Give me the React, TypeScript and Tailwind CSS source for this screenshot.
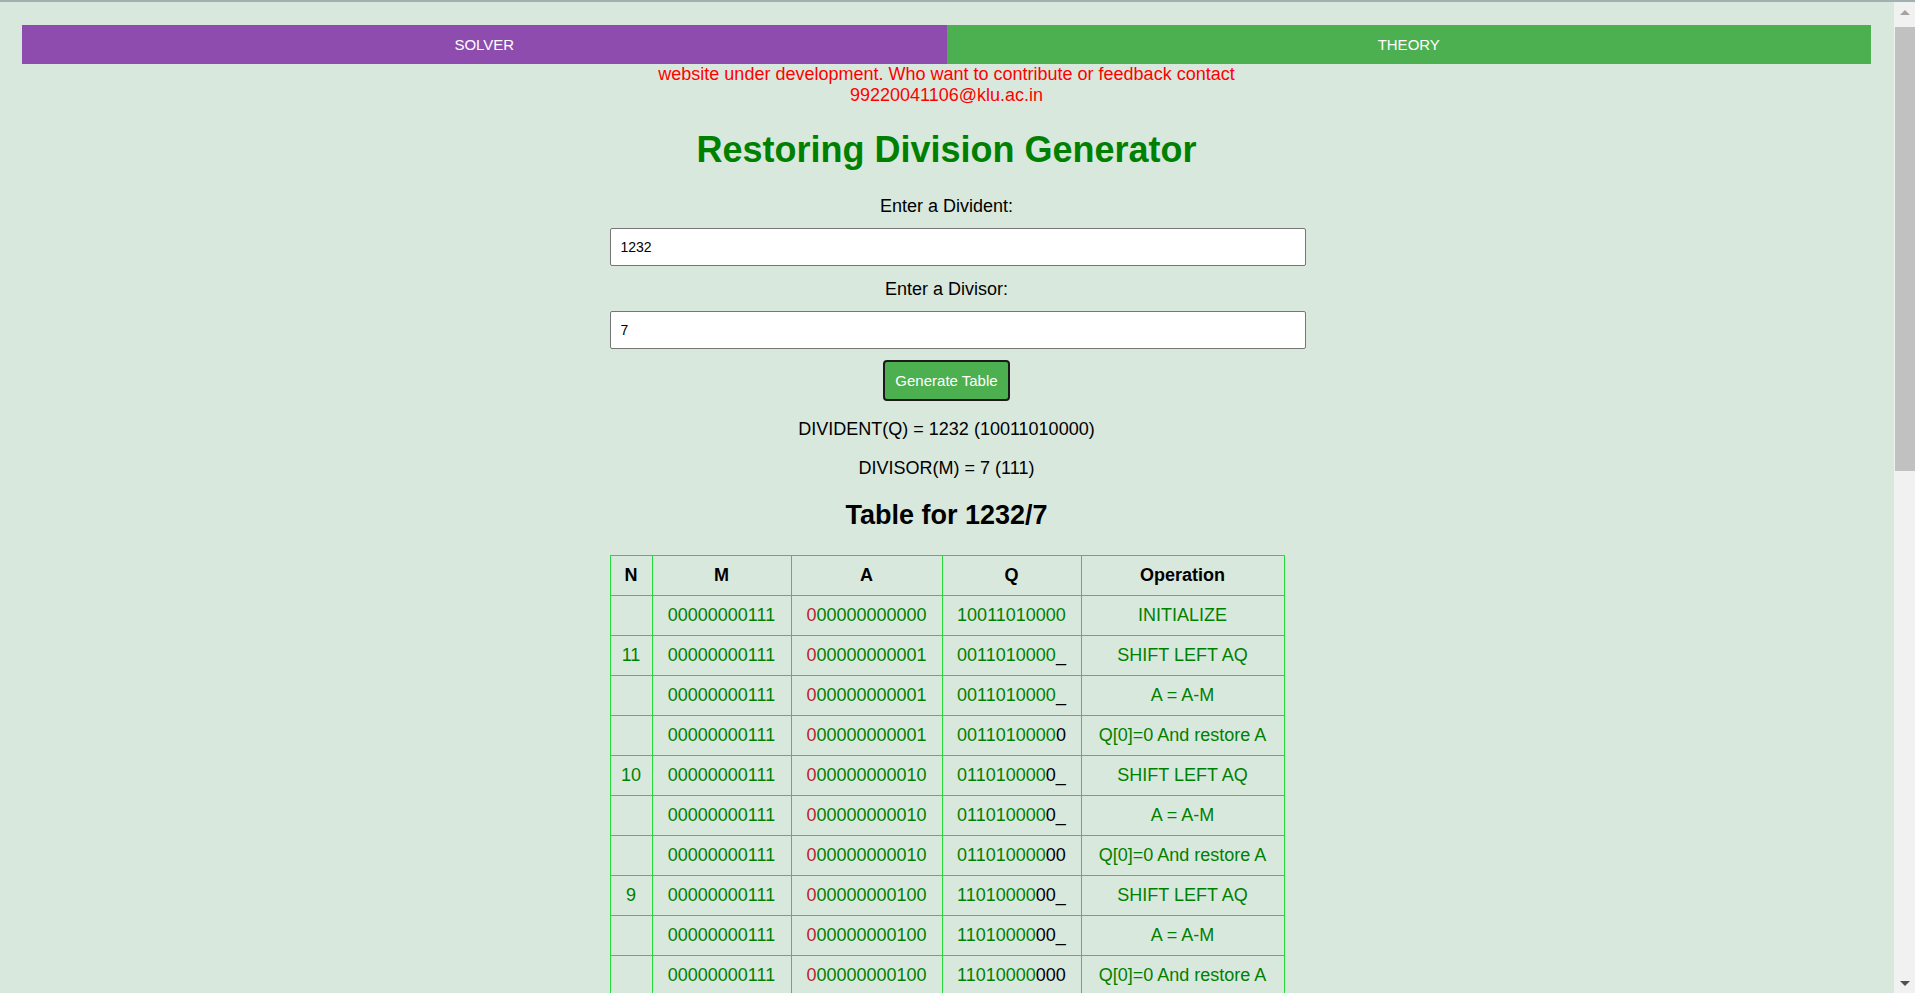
import { useState } from "react";

type Row = {
  n: string;
  m: string;
  a: string;
  qGreen: string;
  qBlack: string;
  op: string;
};

function buildRows(dividend: number, divisor: number): Row[] {
  const orig = dividend.toString(2);
  const n = orig.length;
  const m = divisor.toString(2).padStart(n, "0");
  const fmt = (v: number) => v.toString(2).padStart(n + 1, "0");
  const rows: Row[] = [];
  let a = 0;
  let quot = "";

  rows.push({ n: "", m, a: fmt(a), qGreen: orig, qBlack: "", op: "INITIALIZE" });

  for (let i = 0; i < n; i++) {
    const count = String(n - i);
    a = a * 2 + Number(orig[i]);
    const green = orig.slice(i + 1);
    rows.push({ n: count, m, a: fmt(a), qGreen: green, qBlack: quot + "_", op: "SHIFT LEFT AQ" });

    const diff = a - divisor;
    if (diff < 0) {
      rows.push({ n: "", m, a: fmt(a), qGreen: green, qBlack: quot + "_", op: "A = A-M" });
      quot += "0";
      rows.push({ n: "", m, a: fmt(a), qGreen: green, qBlack: quot, op: "Q[0]=0 And restore A" });
    } else {
      a = diff;
      rows.push({ n: "", m, a: fmt(a), qGreen: green, qBlack: quot + "_", op: "A = A-M" });
      quot += "1";
      rows.push({ n: "", m, a: fmt(a), qGreen: green, qBlack: quot, op: "Q[0]=1" });
    }
  }
  return rows;
}

// the window's scrollbar, as it shows in the screenshot
function ScrollBar() {
  return (
    <div className="fixed right-0 top-[2px] bottom-0 flex w-[21px] flex-col bg-[#f1f1f1]">
      <div className="flex h-[17px] items-center justify-center pt-[4px]">
        <div className="h-0 w-0 border-x-[5px] border-b-[5px] border-x-transparent border-b-[#a3a3a3]" />
      </div>
      <div className="ml-[1px] mt-[8px] h-[444px] bg-[#c1c1c1]" />
      <div className="flex-1" />
      <div className="flex h-[17px] items-center justify-center pb-[2px]">
        <div className="h-0 w-0 border-x-[5px] border-t-[5px] border-x-transparent border-t-[#505050]" />
      </div>
    </div>
  );
}

export default function App() {
  const [dividendText, setDividendText] = useState("1232");
  const [divisorText, setDivisorText] = useState("7");
  const [pair, setPair] = useState<[number, number]>([1232, 7]);
  const [tab, setTab] = useState("solver");

  function handleGenerate() {
    const q = parseInt(dividendText, 10);
    const m = parseInt(divisorText, 10);
    if (!q || !m) {
      alert("Enter valid numbers");
      return;
    }
    setPair([q, m]);
  }

  const [dividend, divisor] = pair;
  const rows = buildRows(dividend, divisor);
  const cell = "border border-[#26d93a] h-[40px] px-[10px] py-0 text-center";

  return (
    <div className="min-h-screen bg-[#d9e8dd] font-['Liberation_Sans',Arial,sans-serif] text-black">
      <div className="h-[2px] bg-[#9fb1b1]" />
      <div className="w-[1893px] pb-[180px]">
        <div className="mx-[22px] mt-[23px] flex h-[39px] text-[15px] text-white">
          <button
            onClick={() => setTab("solver")}
            className="flex flex-1 items-center justify-center bg-[#8e4dae] pt-[1px]"
          >
            SOLVER
          </button>
          <button
            onClick={() => setTab("theory")}
            className="flex flex-1 items-center justify-center bg-[#4caf50] pt-[1px]"
          >
            THEORY
          </button>
        </div>

        <div className="mx-auto w-[674px]">
          <p className="text-center text-[18px] leading-[20.7px] text-[#ff0000]">
            website under development. Who want to contribute or feedback contact 99220041106@klu.ac.in
          </p>

          <h1 className="mt-[24px] text-center text-[36px] font-bold leading-[41px] text-[#008000]">
            Restoring Division Generator
          </h1>

          <label className="mt-[26px] block text-center text-[18px] leading-[21px]">
            Enter a Divident:
          </label>
          <input
            value={dividendText}
            onChange={(e) => setDividendText(e.target.value)}
            className="mt-[11px] block h-[38px] w-[696px] rounded-[2px] border border-[#767676] bg-white px-[10px] text-[14px] text-black outline-none"
          />

          <label className="mt-[13px] block text-center text-[18px] leading-[21px]">
            Enter a Divisor:
          </label>
          <input
            value={divisorText}
            onChange={(e) => setDivisorText(e.target.value)}
            className="mt-[11px] block h-[38px] w-[696px] rounded-[2px] border border-[#767676] bg-white px-[10px] text-[14px] text-black outline-none"
          />

          <div className="mt-[11px] flex justify-center">
            <button
              onClick={handleGenerate}
              className="rounded-[4px] border-2 border-[#1a1a1a] bg-[#4caf50] px-[10px] py-[10px] text-[15px] leading-[17px] text-white"
            >
              Generate Table
            </button>
          </div>

          {tab === "solver" && (
            <>
              <p className="mt-[18px] text-center text-[18px] leading-[21px]">
                DIVIDENT(Q) = {dividend} ({dividend.toString(2)})
              </p>
              <p className="mt-[18px] text-center text-[18px] leading-[21px]">
                DIVISOR(M) = {divisor} ({divisor.toString(2)})
              </p>

              <h2 className="mt-[21px] text-center text-[27px] font-bold leading-[31px]">
                Table for {dividend}/{divisor}
              </h2>

              <table className="mt-[24px] w-[674px] table-fixed border-collapse text-[18px] leading-[21px]">
                <thead>
                  <tr>
                    <th className={`${cell} w-[42px]`}>N</th>
                    <th className={`${cell} w-[139px]`}>M</th>
                    <th className={`${cell} w-[151px]`}>A</th>
                    <th className={`${cell} w-[139px]`}>Q</th>
                    <th className={`${cell} w-[203px]`}>Operation</th>
                  </tr>
                </thead>
                <tbody className="text-[#008000]">
                  {rows.map((row, i) => (
                    <tr key={i}>
                      <td className={cell}>{row.n}</td>
                      <td className={cell}>{row.m}</td>
                      <td className={cell}>
                        <span className="text-[#bf2330]">{row.a[0]}</span>
                        {row.a.slice(1)}
                      </td>
                      <td className={`${cell} whitespace-nowrap`}>
                        {row.qGreen}
                        <span className="text-black">{row.qBlack}</span>
                      </td>
                      <td className={`${cell} whitespace-nowrap`}>{row.op}</td>
                    </tr>
                  ))}
                </tbody>
              </table>
            </>
          )}
        </div>
      </div>
      <ScrollBar />
    </div>
  );
}
